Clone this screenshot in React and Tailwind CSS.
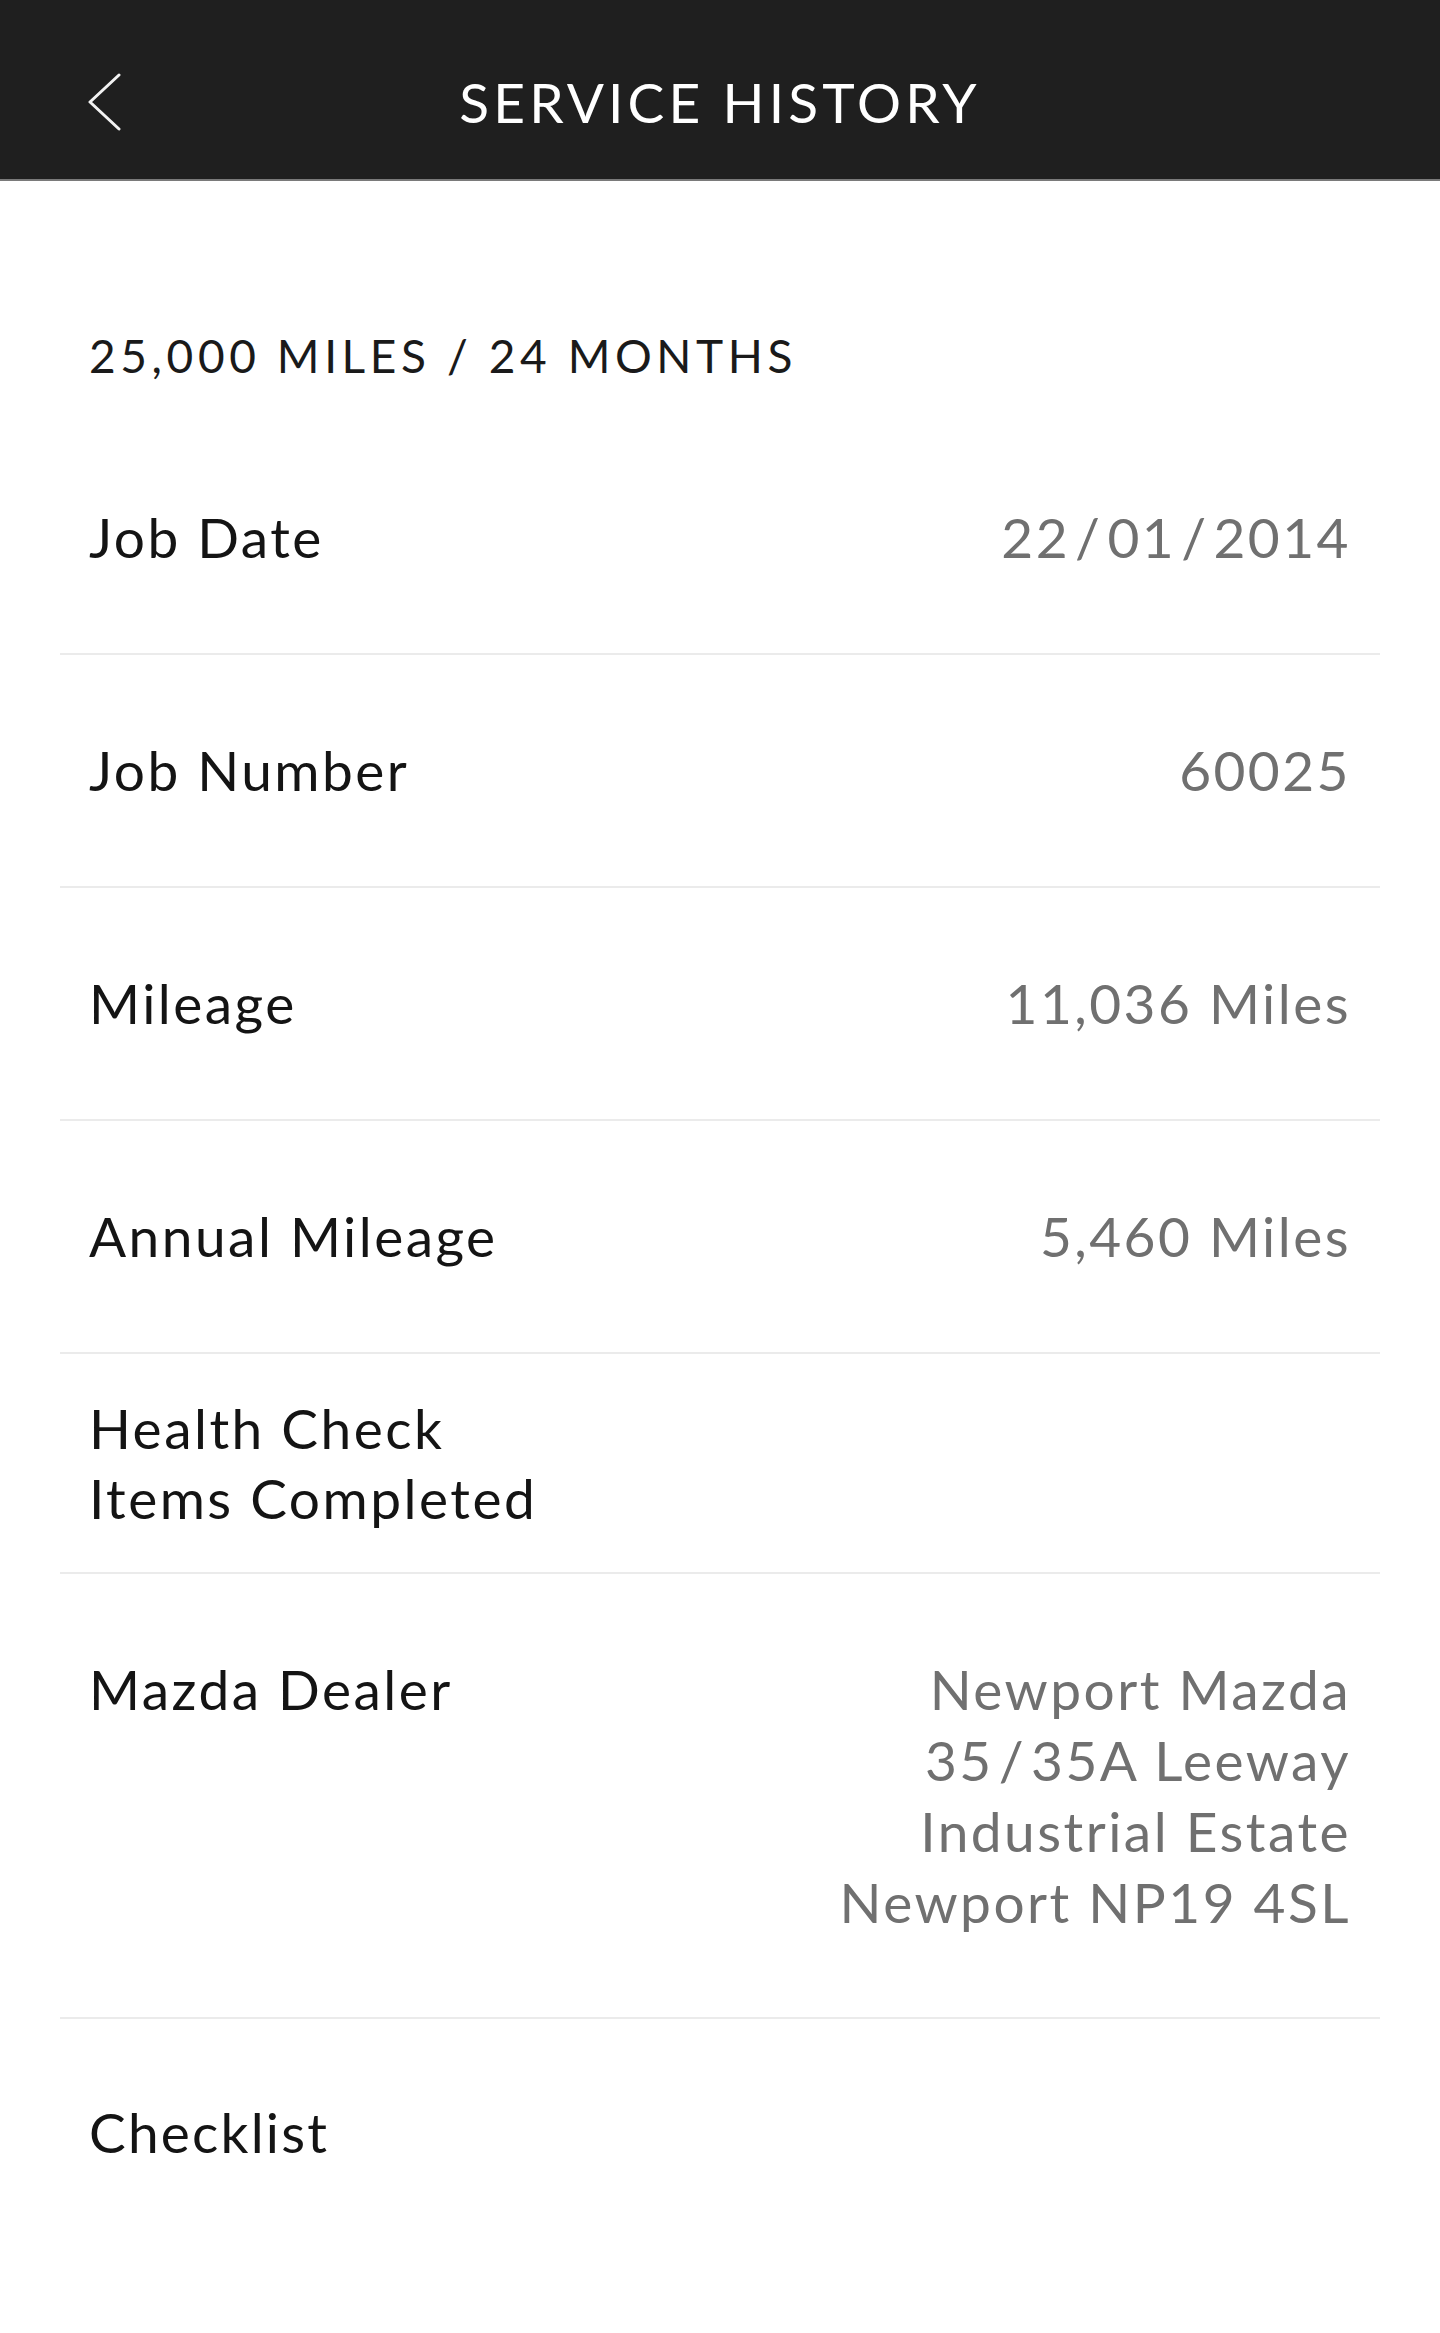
import React from "react";

const Slashed = ({ text }) =>
  text.split("/").map((part, i) => (
    <React.Fragment key={i}>
      {i > 0 && <span className="px-[5px]">/</span>}
      {part}
    </React.Fragment>
  ));

const rows = [
  { label: ["Job Date"], value: ["22/01/2014"], pad: "py-[80px]" },
  { label: ["Job Number"], value: ["60025"], pad: "py-[80px]" },
  { label: ["Mileage"], value: ["11,036 Miles"], pad: "py-[80px]" },
  { label: ["Annual Mileage"], value: ["5,460 Miles"], pad: "py-[80px]" },
  { label: ["Health Check", "Items Completed"], value: [], pad: "py-[39px]" },
  {
    label: ["Mazda Dealer"],
    value: ["Newport Mazda", "35/35A Leeway", "Industrial Estate", "Newport NP19 4SL"],
    pad: "pt-[80px] pb-[79px]",
  },
];

const ServiceHistory = () => {
  return (
    <div className="min-h-[2333px] w-full bg-white font-['Lato',sans-serif]">
      {/* Top bar */}
      <header className="grid h-[181px] grid-cols-[1fr_auto_1fr] items-center border-b-2 border-[#7a7a7a] bg-[#1f1f1f] px-[86px] pt-[24px]">
        <button className="flex h-[60px] w-[40px] items-center justify-start">
          <svg width="36" height="58" viewBox="0 0 36 58" fill="none">
            <path d="M33 2 L4 29 L33 56" stroke="#f2f2f2" strokeWidth="3" strokeLinecap="round" strokeLinejoin="round" />
          </svg>
        </button>
        <h1 className="text-[55px] leading-[60px] tracking-[0.075em] text-white">SERVICE HISTORY</h1>
        <div />
      </header>

      {/* Service interval */}
      <div className="px-[89px] pt-[147px] pb-[38px]">
        <h2 className="text-[46px] leading-[56px] tracking-[0.1em] text-[#1a1a1a]">
          25,000 MILES / 24 MONTHS
        </h2>
      </div>

      {/* Details */}
      <div className="mx-[60px]">
        {rows.map((row) => (
          <div key={row.label[0]} className="border-b-2 border-[#ebebeb]">
            <div className={`flex items-start justify-between px-[29px] ${row.pad}`}>
              <div className="text-[55px] leading-[70px] tracking-[0.045em] text-[#141414]">
                {row.label.map((l) => (
                  <div key={l}>{l}</div>
                ))}
              </div>
              <div className="text-right text-[55px] leading-[71px] tracking-[0.045em] text-[#707070]">
                {row.value.map((v) => (
                  <div key={v}>
                    <Slashed text={v} />
                  </div>
                ))}
              </div>
            </div>
          </div>
        ))}
        <div className="px-[29px] pt-[78px] text-[55px] leading-[70px] tracking-[0.04em] text-[#141414]">
          Checklist
        </div>
      </div>
    </div>
  );
};

export default function App() {
  return <ServiceHistory />;
}
